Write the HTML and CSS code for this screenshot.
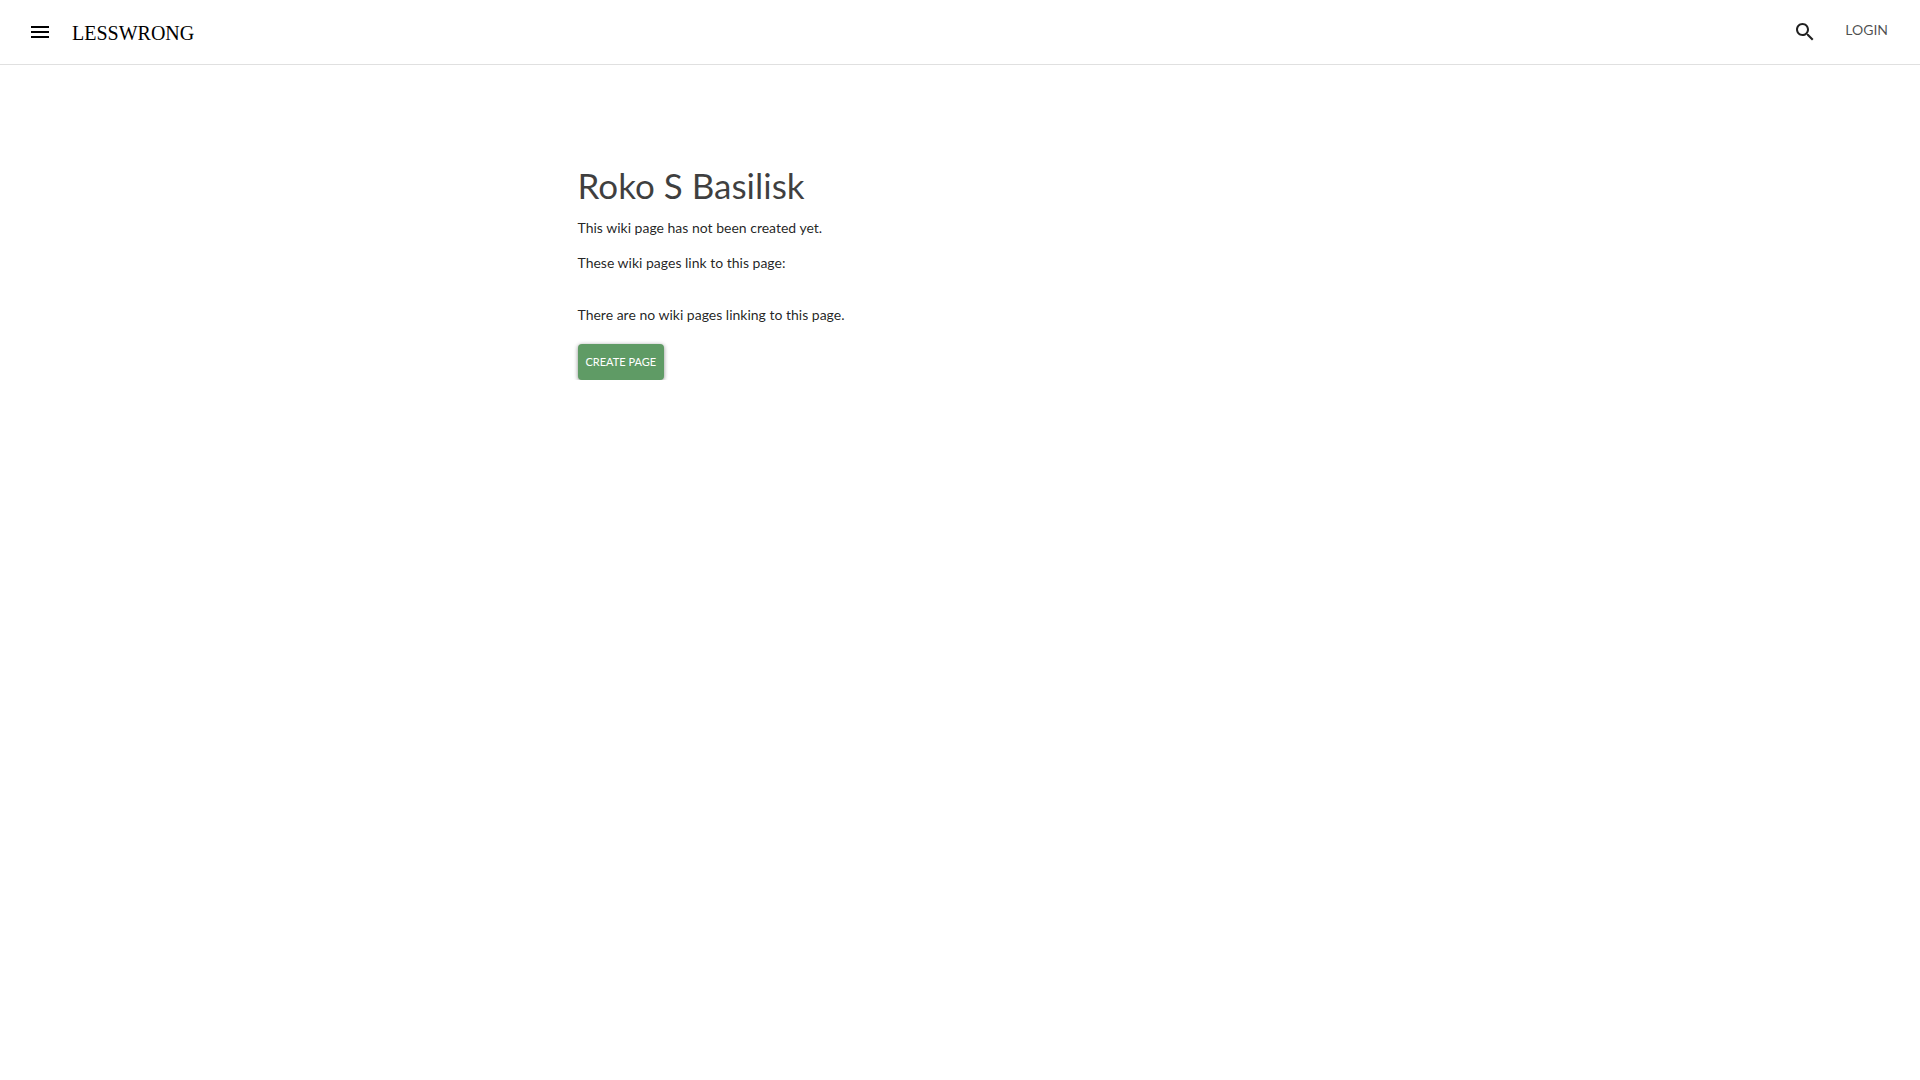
FILE: index.html
```
<!DOCTYPE html>
<html lang="en">
    <head>
        <meta charset="utf-8">
        <meta name="viewport" content="width=device-width, initial-scale=1.0">
        <title>Roko S Basilisk - LessWrong</title>
        <link rel="stylesheet" href="styles.css">
    </head>
    <body>
        <header class="header">
            <button class="icon-button" type="button" aria-label="Menu">
                <svg viewBox="0 0 24 24"><path d="M3 18h18v-2H3v2zm0-5h18v-2H3v2zm0-7v2h18V6H3z"/></svg>
            </button>
            <a class="logo" href="#">LESSWRONG</a>
            <button class="icon-button search" type="button" aria-label="Search">
                <svg viewBox="0 0 24 24"><path d="M15.5 14h-.79l-.28-.27C15.41 12.59 16 11.11 16 9.5 16 5.91 13.09 3 9.5 3S3 5.91 3 9.5 5.91 16 9.5 16c1.61 0 3.09-.59 4.23-1.57l.27.28v.79l5 4.99L20.49 19l-4.99-5zm-6 0C7.01 14 5 11.99 5 9.5S7.01 5 9.5 5 14 7.01 14 9.5 11.99 14 9.5 14z"/></svg>
            </button>
            <button class="login" type="button">LOGIN</button>
        </header>
        <main class="content">
            <h1 class="title">Roko S Basilisk</h1>
            <p>This wiki page has not been created yet.</p>
            <p>These wiki pages link to this page:</p>
            <p class="no-links">There are no wiki pages linking to this page.</p>
            <button class="create" type="button">CREATE PAGE</button>
        </main>
    </body>
</html>
```
FILE: styles.css
```
body{
    margin:0;
    background-color:white;
    color:rgba(0,0,0,.87);
    font-family:"Gill Sans", Lato, sans-serif;
}
button{
    border:none;
    background:none;
    font-family:inherit;
    cursor:pointer;
}
.header{
    display:flex;
    align-items:center;
    height:64px;
    padding:0 20px 0 16px;
    border-bottom:1px solid #e0e0e0;
}
.icon-button{
    width:48px;
    height:48px;
    padding:12px;
}
.icon-button svg{
    display:block;
    width:24px;
    height:24px;
}
.logo{
    margin-left:8px;
    padding-top:2px;
    color:black;
    font-family:"Liberation Serif", serif;
    font-size:20px;
    line-height:24px;
    text-decoration:none;
}
.search{
    margin-left:auto;
}
.search svg{
    fill:rgba(0,0,0,.87);
}
.login{
    margin-left:4px;
    padding:0 12px 4px;
    color:rgba(0,0,0,.7);
    font-size:14px;
    line-height:20px;
}
.content{
    max-width:765px;
    margin:0 auto;
    padding-top:98px;
    font-size:14px;
    line-height:20px;
}
.title{
    margin:0;
    color:rgba(0,0,0,.75);
    font-size:35px;
    font-weight:400;
    line-height:44px;
}
.content p{
    margin:0 0 15px;
}
.title + p{
    padding-top:11px;
}
.content .no-links{
    margin:32px 0 19px;
}
.create{
    display:block;
    height:36px;
    padding:0 8px 2px;
    border-radius:4px;
    background-color:#5f9b65;
    box-shadow:0 1px 4px rgba(0,0,0,.45);
    color:white;
    font-size:11px;
}
```
